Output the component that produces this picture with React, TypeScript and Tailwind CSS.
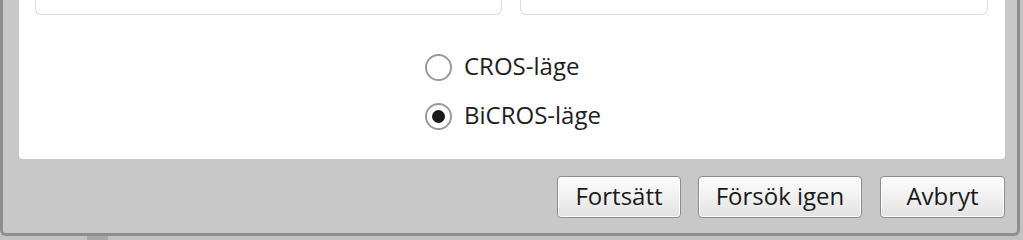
import React from "react";

function Radio({ checked, label }: { checked: boolean; label: string }) {
  return (
    <div className="flex items-center gap-[12px] h-[28px]">
      <span className="w-[27px] h-[27px] rounded-full border-2 border-[#9a9a9a] bg-white flex items-center justify-center shrink-0">
        {checked && <span className="w-[13px] h-[13px] rounded-full bg-[#1a1a1a]" />}
      </span>
      <span className="text-[24px] text-[#1e1e1e] leading-none pb-[2px]">{label}</span>
    </div>
  );
}

function Btn({ label, w }: { label: string; w: string }) {
  return (
    <button
      className={`${w} h-[42px] rounded-[4px] border border-[#8c8c8c] bg-gradient-to-b from-[#fdfdfd] to-[#e3e3e3] shadow-[inset_0_0_0_1px_#ffffff] text-[24px] text-[#1a1a1a] leading-none flex items-center justify-center pb-[2px]`}
    >
      {label}
    </button>
  );
}

export default function App() {
  return (
    <div
      className="w-[1023px] h-[240px] bg-[#c2c2c2] overflow-hidden relative"
      style={{ fontFamily: '"Open Sans", "Noto Sans", "DejaVu Sans", sans-serif' }}
    >
      <div className="absolute left-[87px] top-[236px] w-[21px] h-[4px] bg-[#a8a8a8]" />
      <div className="relative w-[1020px] h-[236px] bg-[#c8c8c8] border-l-[3px] border-r-[3px] border-b-[3px] border-[#8e8e8e] rounded-b-[6px] flex flex-col">
        <div className="ml-[16px] w-[986px] h-[159px] bg-white rounded-b-[4px] flex flex-col">
          <div className="flex gap-[18px] pl-[16px]">
            <div className="w-[467px] h-[15px] border border-t-0 border-[#dcdcdc] rounded-b-[6px]" />
            <div className="w-[468px] h-[15px] border border-t-0 border-[#dcdcdc] rounded-b-[6px]" />
          </div>
          <div className="flex flex-col gap-[21px] pl-[406px] pt-[38px]">
            <Radio checked={false} label="CROS-läge" />
            <Radio checked={true} label="BiCROS-läge" />
          </div>
        </div>
        <div className="flex justify-end pt-[17px] pr-[12px]">
          <Btn label="Fortsätt" w="w-[124px]" />
          <div className="w-[17px]" />
          <Btn label="Försök igen" w="w-[164px]" />
          <div className="w-[18px]" />
          <Btn label="Avbryt" w="w-[125px]" />
        </div>
      </div>
    </div>
  );
}
